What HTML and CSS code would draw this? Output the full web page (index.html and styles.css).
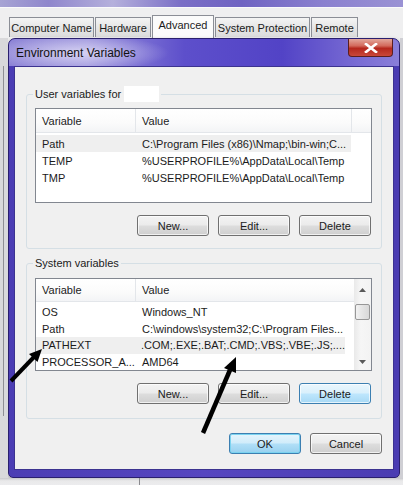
FILE: index.html
```html
<!DOCTYPE html>
<html>
<head>
<meta charset="utf-8">
<link rel="stylesheet" href="styles.css">
</head>
<body>
<div class="screen">
  <div class="bgtop"></div>
  <div class="tabs">
    <div class="tab t1">Computer Name</div>
    <div class="tab t2">Hardware</div>
    <div class="tab t3 sel">Advanced</div>
    <div class="tab t4">System Protection</div>
    <div class="tab t5">Remote</div>
  </div>
  <div class="stage">
    <div class="leftstrip"><div class="vline"></div></div>
    <div class="dialog">
      <div class="titlebar">
        <span class="title">Environment Variables</span>
        <div class="close">
          <svg width="14" height="10" viewBox="0 0 14 10"><path d="M2 1 L12 9 M12 1 L2 9" stroke="#fff" stroke-width="2.6" stroke-linecap="square"/></svg>
        </div>
      </div>
      <div class="client">
        <fieldset class="group g-user">
          <legend>User variables for <span class="redact"></span></legend>
          <div class="list l-user">
            <div class="cols">
              <div class="hdr">
                <div class="c1">Variable</div><div class="c2">Value</div><div class="c3"></div>
              </div>
              <div class="row hover"><div class="c1">Path</div><div class="c2">C:\Program Files (x86)\Nmap;\bin-win;C...</div></div>
              <div class="row"><div class="c1">TEMP</div><div class="c2">%USERPROFILE%\AppData\Local\Temp</div></div>
              <div class="row"><div class="c1">TMP</div><div class="c2">%USERPROFILE%\AppData\Local\Temp</div></div>
            </div>
          </div>
          <div class="btnrow">
            <div class="btn">New...</div>
            <div class="btn">Edit...</div>
            <div class="btn">Delete</div>
          </div>
        </fieldset>
        <fieldset class="group g-sys">
          <legend>System variables</legend>
          <div class="list l-sys">
            <div class="cols">
              <div class="hdr">
                <div class="c1">Variable</div><div class="c2">Value</div>
              </div>
              <div class="row"><div class="c1">OS</div><div class="c2">Windows_NT</div></div>
              <div class="row"><div class="c1">Path</div><div class="c2">C:\windows\system32;C:\Program Files...</div></div>
              <div class="row hover"><div class="c1">PATHEXT</div><div class="c2">.COM;.EXE;.BAT;.CMD;.VBS;.VBE;.JS;....</div></div>
              <div class="row"><div class="c1">PROCESSOR_A...</div><div class="c2">AMD64</div></div>
            </div>
            <div class="scrollbar">
              <svg class="arr" width="7" height="4" viewBox="0 0 7 4"><path d="M0 4 L3.5 0 L7 4 Z" fill="#5a5a5a"/></svg>
              <div class="thumb"></div>
              <div class="track"></div>
              <svg class="arr" width="7" height="4" viewBox="0 0 7 4"><path d="M0 0 L3.5 4 L7 0 Z" fill="#5a5a5a"/></svg>
            </div>
          </div>
          <div class="btnrow">
            <div class="btn">New...</div>
            <div class="btn">Edit...</div>
            <div class="btn hot">Delete</div>
          </div>
        </fieldset>
        <div class="btnrow main">
          <div class="btn focus">OK</div>
          <div class="btn">Cancel</div>
        </div>
      </div>
    </div>
    <div class="rightstrip"></div>
  </div>
  <div class="bottom"><div class="bline"></div></div>
  <svg class="arrows" width="403" height="485" viewBox="0 0 403 485">
    <line x1="11" y1="381" x2="34" y2="357" stroke="#000" stroke-width="4"/>
    <path d="M42 349 L37.5 362 L29 354 Z" fill="#000"/>
    <line x1="203" y1="433" x2="230" y2="370" stroke="#000" stroke-width="4.5"/>
    <path d="M236 357 L236 373 L224 368 Z" fill="#000"/>
  </svg>
</div>
</body>
</html>
```

FILE: styles.css
```css
html, body {
  margin: 0;
  padding: 0;
}
body {
  width: 403px;
  height: 485px;
  overflow: hidden;
  background: #e4e4e6;
  font-family: "Liberation Sans", Arial, sans-serif;
  font-size: 11px;
  color: #1b1b1b;
}
.screen {
  position: relative;
  width: 403px;
  height: 485px;
  display: flex;
  flex-direction: column;
  background: #efeff0;
}
.bgtop {
  height: 7px;
  background: linear-gradient(90deg, #a7a4d4 0%, #8f86cc 12%, #b5b0dc 28%, #7a6ec6 45%, #6f63c2 60%, #8a80cf 80%, #9a92d4 100%);
  border-bottom: 1px solid #fafafa;
}
.tabs {
  height: 30px;
  display: flex;
  align-items: flex-end;
  padding-left: 9px;
  box-sizing: border-box;
}
.tab {
  height: 20px;
  margin-bottom: 1px;
  margin-right: 1px;
  box-sizing: border-box;
  border: 1px solid #8b8e96;
  border-bottom: none;
  background: linear-gradient(#f4f4f4, #e6e6e6 50%, #dcdcdc);
  display: flex;
  align-items: center;
  justify-content: center;
  font-size: 11px;
  white-space: nowrap;
}
.tab.sel {
  height: 23px;
  margin-bottom: 0;
  background: #fbfbfb;
  align-items: flex-start;
  padding-top: 3px;
}
.t1 { width: 85px; }
.t2 { width: 56px; }
.t3 { width: 62px; }
.t4 { width: 95px; }
.t5 { width: 47px; }

.stage {
  display: flex;
  height: 440px;
}
.leftstrip {
  width: 8px;
  background: #d9d9db;
  position: relative;
}
.vline {
  margin: 28px 0 0 3px;
  width: 1px;
  height: 350px;
  background: #8f8f94;
}
.rightstrip {
  width: 3px;
  background: #cfcfd4;
}
.dialog {
  width: 392px;
  height: 440px;
  box-sizing: border-box;
  border: 1px solid #2a1f6e;
  border-radius: 7px 7px 5px 5px;
  background: linear-gradient(90deg, #4b3db4, #5646c0 50%, #4a3cb2);
  display: flex;
  flex-direction: column;
  box-shadow: 0 2px 4px rgba(0,0,0,0.35);
}
.titlebar {
  height: 27px;
  display: flex;
  justify-content: space-between;
  align-items: flex-start;
  border-radius: 6px 6px 0 0;
  background:
    radial-gradient(ellipse 90px 18px at 70px 14px, rgba(235,232,250,0.75), rgba(235,232,250,0) 100%),
    linear-gradient(90deg, #8d84d6 0%, #9b93dc 20%, #5d4fcb 45%, #5243c6 70%, #7a6dd4 90%, #8a7fd8 100%);
}
.title {
  padding: 7px 0 0 7px;
  font-size: 12px;
  color: #111;
}
.close {
  width: 45px;
  height: 18px;
  margin-right: 6px;
  box-sizing: border-box;
  border: 1px solid #5b1e1e;
  border-top: none;
  border-radius: 0 0 4px 4px;
  background: linear-gradient(#e3a79b 0%, #d36a5c 40%, #b5281d 55%, #c9483a 100%);
  display: flex;
  align-items: center;
  justify-content: center;
}
.client {
  flex: 1;
  margin: 0 5px 7px 5px;
  background: #f0f0f0;
  border: 1px solid #3c3390;
  display: flex;
  flex-direction: column;
  align-items: flex-start;
}
.group {
  margin: 0 0 0 11px;
  width: 356px;
  box-sizing: border-box;
  border: 1px solid #d5dfe5;
  border-radius: 3px;
  padding: 0 9px 12px 8px;
  min-width: 0;
}
.g-user { margin-top: 19px; padding-top: 6px; }
.g-sys { margin-top: 8px; padding-top: 8px; padding-bottom: 14px; }
.group legend {
  padding: 0 2px;
  margin-left: -2px;
  line-height: 13px;
  font-size: 11px;
  display: flex;
  align-items: center;
}
.redact {
  display: inline-block;
  width: 35px;
  height: 16px;
  background: #fff;
  margin-left: 3px;
}
.list {
  box-sizing: border-box;
  width: 337px;
  border: 1px solid #828790;
  background: #fff;
  display: flex;
}
.l-user { height: 95px; }
.l-sys { height: 93px; }
.cols {
  flex: 1;
  display: flex;
  flex-direction: column;
}
.hdr {
  height: 24px;
  display: flex;
  align-items: center;
  margin-bottom: 2px;
  background: linear-gradient(#ffffff, #fbfbfb 60%, #f3f4f6);
  border-bottom: 1px solid #e3e6ea;
  box-sizing: border-box;
}
.hdr .c1 {
  border-right: 1px solid #e3e6ea;
  align-self: stretch;
  display: flex;
  align-items: center;
}
.hdr .c2 {
  flex: 1;
  align-self: stretch;
  display: flex;
  align-items: center;
}
.l-user .hdr .c2 { flex: none; width: 216px; border-right: 1px solid #e3e6ea; box-sizing: border-box; }
.c1 {
  width: 100px;
  padding-left: 6px;
  box-sizing: border-box;
  white-space: nowrap;
}
.c2 {
  padding-left: 6px;
  white-space: nowrap;
}
.c3 { flex: 1; }
.row {
  height: 17px;
  display: flex;
  align-items: center;
  width: 315px;
}
.row.hover { background: #efefef; }
.l-sys .row.hover { width: 309px; }
.scrollbar {
  width: 17px;
  background: linear-gradient(90deg, #e9e9e9, #f6f6f6 40%, #f3f3f3);
  display: flex;
  flex-direction: column;
  align-items: center;
  padding: 9px 0 6px;
  box-sizing: border-box;
}
.scrollbar .arr { flex: none; }
.thumb {
  margin-top: 12px;
  width: 15px;
  height: 16px;
  box-sizing: border-box;
  border: 1px solid #979797;
  border-radius: 2px;
  background: linear-gradient(90deg, #f2f2f2, #e4e4e4 50%, #d8d8d8);
}
.track { flex: 1; }
.btnrow {
  display: flex;
  justify-content: flex-end;
  gap: 9px;
  margin-top: 12px;
  padding-right: 1px;
}
.btn {
  width: 72px;
  height: 21px;
  box-sizing: border-box;
  border: 1px solid #707070;
  border-radius: 3px;
  background: linear-gradient(#f3f3f3 0%, #ebebeb 48%, #dddddd 52%, #cfcfcf 100%);
  display: flex;
  align-items: center;
  justify-content: center;
  font-size: 11px;
  box-shadow: inset 0 0 0 1px rgba(255,255,255,0.7);
}
.btn.hot {
  border-color: #3c7fb1;
  background: linear-gradient(#eaf6fd 0%, #d9f0fc 48%, #bee6fd 52%, #a7d9f5 100%);
}
.btn.focus {
  border-color: #3c7fb1;
  background: linear-gradient(#e5f4fc 0%, #d0ecfa 48%, #b1dff7 52%, #98d1ef 100%);
  box-shadow: inset 0 0 0 1px #7bd3f0;
}
.btnrow.main {
  align-self: flex-end;
  margin-top: 14px;
  margin-right: 11px;
  padding-right: 0;
}
.bottom {
  flex: 1;
  background: linear-gradient(#c8c8cc, #e9e9ea 40%, #ececee);
  position: relative;
}
.bline {
  margin-left: 139px;
  width: 1px;
  height: 100%;
  background: #8a8a8e;
}
.arrows {
  position: absolute;
  left: 0;
  top: 0;
  pointer-events: none;
}
```
